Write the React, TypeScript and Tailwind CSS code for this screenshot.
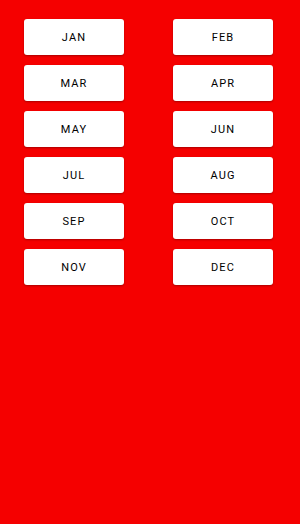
import React from "react";

const months = ["JAN","FEB","MAR","APR","MAY","JUN","JUL","AUG","SEP","OCT","NOV","DEC"];

export default function App() {
  return (
    <div className="w-[300px] h-[524px] bg-[#f50000] overflow-hidden" style={{ fontFamily: "Roboto, 'Liberation Sans', sans-serif" }}>
      <div className="grid grid-cols-[100px_100px] gap-x-[49px] gap-y-[10px] pt-[19px] pl-[24px]">
        {months.map((m) => (
          <button
            key={m}
            className="h-[36px] w-[100px] bg-white rounded-[3px] shadow-[0_1px_2px_rgba(0,0,0,0.3)] text-[11px] font-normal tracking-[0.1em] text-black flex items-center justify-center pt-[2px]"
          >
            {m}
          </button>
        ))}
      </div>
    </div>
  );
}
